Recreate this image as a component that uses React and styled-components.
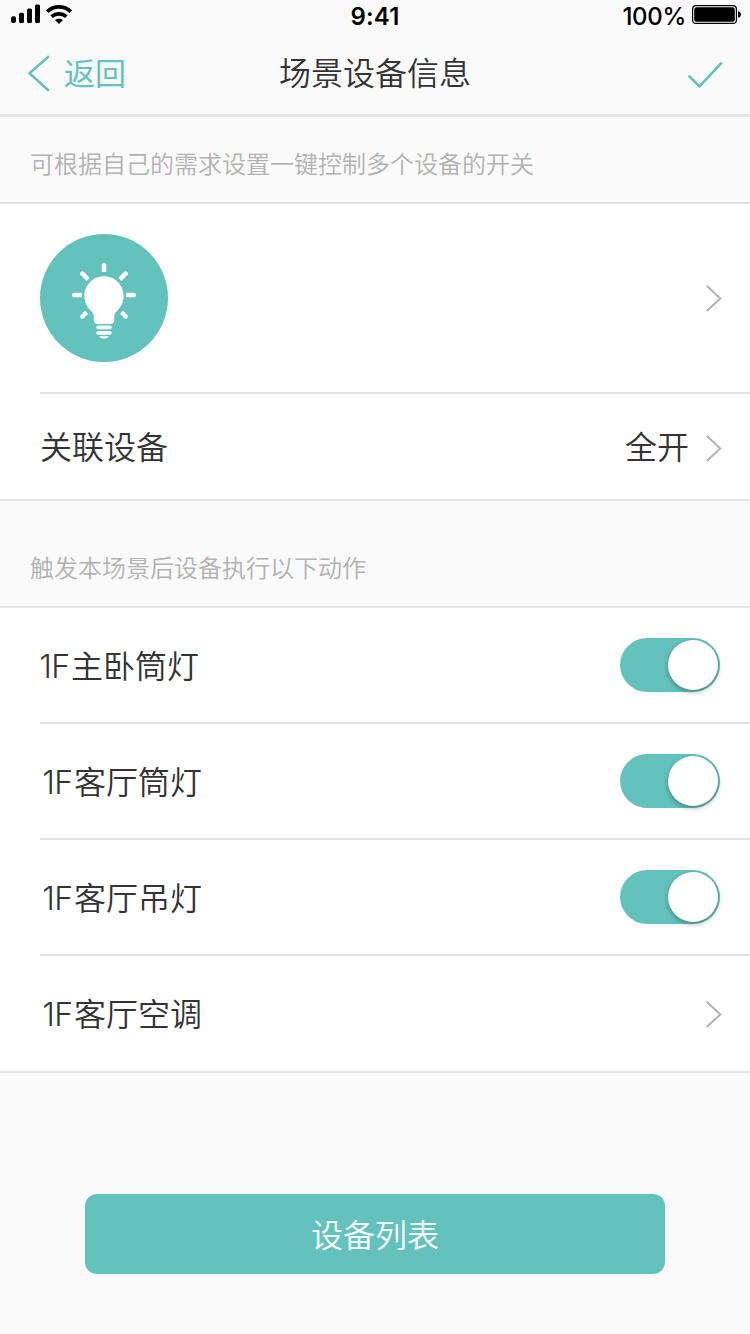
import React, { useState } from 'react';

import styled, { createGlobalStyle } from 'styled-components';

const GlobalStyle = createGlobalStyle`
  body {
    margin: 0;
    background-color: #fafafa;
    color: #333;
    font-family: Inter, 'Noto Sans CJK SC', sans-serif;
    font-weight: 350;
  }
`;

const Page = styled.div`
  display: flex;
  flex-direction: column;
  width: 750px;
  height: 1334px;
  overflow: hidden;
  background-color: #fafafa;
`;

const StatusBar = styled.div`
  display: grid;
  grid-template-columns: 1fr auto 1fr;
  height: 32px;
  color: #000;
  font-size: 24px;
  line-height: 32px;
`;

const Signal = styled.svg`
  display: block;
  width: 80px;
  height: 32px;
`;

const Time = styled.span`
  padding-top: 1px;
  font-weight: 600;
  letter-spacing: 0.2px;
  line-height: 31px;
`;

const Power = styled.div`
  display: flex;
  justify-content: flex-end;
  font-weight: 500;
  letter-spacing: -0.3px;
`;

const Percent = styled.span`
  padding-top: 1px;
  line-height: 31px;
`;

const Battery = styled.svg`
  display: block;
  width: 64px;
  height: 32px;
`;

const NavBar = styled.div`
  display: grid;
  grid-template-columns: 1fr auto 1fr;
  height: 82px;
  border-bottom: 3px solid #e4e4e4;
`;

const Back = styled.button`
  display: flex;
  padding: 0;
  border: none;
  background: none;
  color: #64c2bc;
  font: inherit;
  font-weight: 400;
  font-size: 31px;
  line-height: 84px;
`;

const NavIcon = styled.svg`
  display: block;
  width: 64px;
  height: 82px;
  fill: none;
  stroke: #64c2bc;
  stroke-width: 2.6;
  stroke-linecap: round;
`;

const Title = styled.div`
  font-size: 32px;
  line-height: 84px;
`;

const Done = styled.div`
  display: flex;
  justify-content: flex-end;
`;

const Hint = styled.div`
  box-sizing: border-box;
  height: ${(props) => props.$height}px;
  padding: ${(props) => props.$top}px 30px 0;
  border-bottom: 2px solid #e4e4e4;
  color: #b2b2b2;
  font-size: 24px;
  line-height: 36px;
`;

const List = styled.div`
  background-color: #fff;
  border-bottom: 2px solid #e4e4e4;
`;

const Row = styled.div`
  box-sizing: border-box;
  display: flex;
  align-items: center;
  height: ${(props) => props.$height}px;
  margin-left: 40px;
  padding-right: ${(props) => (props.$toggle ? 30 : 28)}px;
  font-size: 32px;
  line-height: 48px;

  & + & {
    border-top: 2px solid #e4e4e4;
  }
`;

const Label = styled.div`
  flex: 1;
  padding-top: ${(props) => props.$drop || 0}px;
  padding-left: ${(props) => props.$indent || 0}px;
`;

const Latin = styled.span`
  margin-right: 1.5px;
  margin-left: -0.7px;
  letter-spacing: -0.6px;
`;

const Value = styled.div`
  margin-right: 16px;
  padding-top: 3px;
`;

const Chevron = styled.svg`
  display: block;
  width: 17px;
  height: 28px;
  padding-top: ${(props) => props.$drop || 0}px;
  fill: none;
  stroke: #b2b2b2;
  stroke-width: 2;
`;

const SceneIcon = styled.svg`
  display: block;
  width: 128px;
  height: 128px;
`;

const Toggle = styled.button`
  box-sizing: border-box;
  width: 100px;
  height: 54px;
  padding: 2px;
  padding-left: ${(props) => (props.$on ? 48 : 2)}px;
  border: none;
  border-radius: 27px;
  background-color: ${(props) => (props.$on ? '#64c2bc' : '#e4e4e4')};
`;

const Knob = styled.span`
  display: block;
  width: 50px;
  height: 50px;
  border-radius: 50%;
  background-color: #fff;
  box-shadow: 0 2px 5px rgba(0, 0, 0, 0.35);
`;

const Footer = styled.div`
  padding: 121px 85px 0;
`;

const Button = styled.button`
  display: block;
  width: 100%;
  height: 80px;
  padding: 4px 0 0;
  border: none;
  border-radius: 12px;
  background-color: #64c2bc;
  color: #fff;
  font: inherit;
  font-size: 32px;
  line-height: 76px;
`;

const Arrow = ({ drop }) => (
  <Chevron viewBox="0 0 17 28" $drop={drop}>
    <path d="M1.700 1.700 15.300 14.500 1.700 27" />
  </Chevron>
);

const Switch = () => {
  const [on, setOn] = useState(true);

  return (
    <Toggle $on={on} onClick={() => setOn(!on)}>
      <Knob />
    </Toggle>
  );
};

const Bulb = () => (
  <SceneIcon viewBox="0 0 128 128">
    <circle cx="64" cy="64" r="64" fill="#64c2bc" />
    <g fill="#fff">
      <path d="M64 42.300c-11 0-19.600 8.800-19.600 19.600 0 6.500 3 11.500 6.800 15.300 2.300 2.300 2.600 3.800 2.600 6.300v2.500c0 2.500 1.700 4 4.200 4h12c2.500 0 4.200-1.500 4.200-4v-2.500c0-2.500.3-4 2.600-6.300 3.800-3.800 6.800-8.800 6.800-15.300C83.600 51.100 75 42.300 64 42.300z" />
      <rect x="56.300" y="91.500" width="15.400" height="3.700" rx="1.800" />
      <rect x="56.300" y="97" width="15.400" height="3.700" rx="1.800" />
      <path d="M59 102.200h10c-1 1.600-2.500 2.300-5 2.300s-4-.7-5-2.300z" />
      <path d="M61.800 38v-6.800a2.200 2.200 0 0 1 4.400 0v6.800z" />
      <path d="M41.800 58.800h-7.600a2.200 2.200 0 0 0 0 4.400h7.600z" />
      <path d="M86.200 58.800h7.600a2.200 2.200 0 0 1 0 4.400h-7.600z" />
      <path d="M46.600 46.900l-6-6a2.200 2.200 0 0 1 3.100-3.100l6 6z" />
      <path d="M81.400 46.900l6-6a2.200 2.200 0 0 0-3.100-3.100l-6 6z" />
      <path d="M45 76.700l-4.400 4.400a2.200 2.200 0 0 0 3.100 3.100l4.400-4.400z" />
      <path d="M83 76.700l4.400 4.400a2.200 2.200 0 0 1-3.100 3.100l-4.400-4.400z" />
    </g>
  </SceneIcon>
);

const devices = [
  { name: '主卧筒灯', indent: 0, toggle: true, height: 114 },
  { name: '客厅筒灯', indent: 3, toggle: true, height: 116 },
  { name: '客厅吊灯', indent: 3, toggle: true, height: 116 },
  { name: '客厅空调', indent: 3, toggle: false, height: 117 },
];

const App = () => {
  return (
    <Page>
      <GlobalStyle />
      <StatusBar>
        <Signal viewBox="0 0 80 32">
          <rect x="11" y="16.300" width="5" height="6.700" rx="2" />
          <rect x="19" y="12.700" width="5" height="10.300" rx="1.500" />
          <rect x="27" y="8.500" width="5" height="14.500" rx="1.500" />
          <rect x="35" y="4.500" width="5" height="18.500" rx="1.500" />
          <g fill="none" stroke="#000" strokeWidth="3.800">
            <path d="M47.200 11.700a17 17 0 0 1 23.600 0" />
            <path d="M51.600 16.700a11 11 0 0 1 14.800 0" />
          </g>
          <path d="M55 20a6.500 6.500 0 0 1 8 0l-4 4z" />
        </Signal>
        <Time>9:41</Time>
        <Power>
          <Percent>100%</Percent>
          <Battery viewBox="0 0 64 32">
            <rect x="6.600" y="5.600" width="43.800" height="17.800" rx="3.500" fill="none" stroke="#000" strokeWidth="1.200" />
            <rect x="8.200" y="7.200" width="40.600" height="14.600" rx="2.500" />
            <path d="M52 11.300c4 .9 4 5.500 0 6.400z" />
          </Battery>
        </Power>
      </StatusBar>
      <NavBar>
        <Back>
          <NavIcon viewBox="0 0 64 82">
            <path d="M48 25 29.500 41.300 48 58" />
          </NavIcon>
          返回
        </Back>
        <Title>场景设备信息</Title>
        <Done>
          <NavIcon viewBox="0 0 64 82">
            <path d="M3.500 44.500 13.500 54.500 35 31.300" />
          </NavIcon>
        </Done>
      </NavBar>
      <Hint $height={87} $top={30}>可根据自己的需求设置一键控制多个设备的开关</Hint>
      <List>
        <Row $height={188}>
          <Label>
            <Bulb />
          </Label>
          <Arrow />
        </Row>
        <Row $height={107}>
          <Label $drop={3}>关联设备</Label>
          <Value>全开</Value>
          <Arrow drop={2} />
        </Row>
      </List>
      <Hint $height={107} $top={50}>触发本场景后设备执行以下动作</Hint>
      <List>
        {devices.map((device) => (
          <Row key={device.name} $height={device.height} $toggle={device.toggle}>
            <Label $drop={3} $indent={device.indent}>
              <Latin>1F</Latin>
              {device.name}
            </Label>
            {device.toggle ? <Switch /> : <Arrow />}
          </Row>
        ))}
      </List>
      <Footer>
        <Button>设备列表</Button>
      </Footer>
    </Page>
  );
};

export default App;
